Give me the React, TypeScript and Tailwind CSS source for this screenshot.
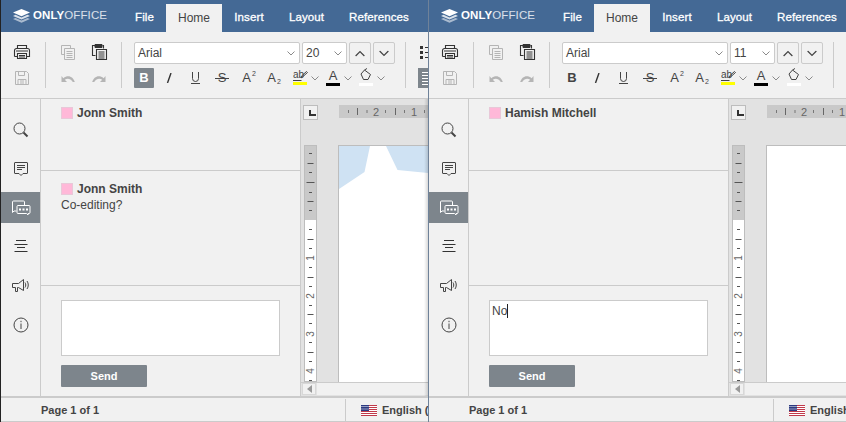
type IconProps = { className?: string };

const Svg = ({ className = "", children, w = 20, h = 20 }: { className?: string; children: React.ReactNode; w?: number; h?: number }) => (
  <svg width={w} height={h} viewBox={`0 0 ${w} ${h}`} fill="none" stroke="currentColor" strokeWidth="1" className={`block ${className}`}>
    {children}
  </svg>
);

const PrintIcon = () => (
  <Svg className="text-[#333]">
    <path d="M5.500 6.500v-3h9v3M2.500 14.500v-6a2 2 0 0 1 2-2h11a2 2 0 0 1 2 2v6h-3M5.500 14.500h-3" strokeWidth="1.100" />
    <path d="M5.500 11.500h9v5h-9z" strokeWidth="1.100" />
    <path d="M4 9h12M7 13.500h6M7 15h6" />
  </Svg>
);
const SaveIcon = () => (
  <Svg className="text-[#b5b5b5]">
    <path d="M3.500 3.500h11l2 2v11h-13z" />
    <path d="M6.500 3.500v4h6v-4M6 16.500v-5h8v5M8 13h4M8 15h4" />
  </Svg>
);
const CopyIcon = () => (
  <Svg className="text-[#b5b5b5]">
    <path d="M3.500 3.500h9v3M3.500 3.500v9h3M6.500 6.500h10v11h-10z" />
    <path d="M8.500 9.500h6M8.500 11.500h6M8.500 13.500h6M8.500 15.500h6" />
  </Svg>
);
const PasteIcon = () => (
  <Svg className="text-[#333]">
    <path d="M6.500 13.500h-3v-10h3M13.500 3.500h1v3" strokeWidth="1.100" />
    <path d="M6 2.500h7v3H6z" fill="currentColor" />
    <path d="M7.500 7.500h10v10h-10z" strokeWidth="1.100" />
    <path d="M9.500 10h6M9.500 12h6M9.500 14h6M9.500 16h6" />
  </Svg>
);
const UndoIcon = ({ flip = false }: { flip?: boolean }) => (
  <Svg className={`text-[#b5b5b5] ${flip ? "-scale-x-100" : ""}`}>
    <path d="M3.500 8v6h5.500l-2.200-2.200c2.800-1.800 5.600-1.200 8 2.200h2c-1.500-5.500-6.800-7.800-11.500-3.800z" fill="currentColor" stroke="none" />
  </Svg>
);
const Chevron = ({ className = "text-[#8a8a8a]" }: IconProps) => (
  <svg width="8" height="5" viewBox="0 0 8 5" fill="none" stroke="currentColor" className={`block ${className}`}>
    <path d="M0.500 0.500 4 4l3.500-3.500" />
  </svg>
);
const SearchIcon = () => (
  <Svg className="text-[#444]">
    <circle cx="8.500" cy="8.500" r="5.500" />
    <path d="m12.500 12.500 4 4" strokeWidth="2" />
  </Svg>
);
const ChatIcon = () => (
  <Svg className="text-[#444]">
    <path d="M4 3.500h12a.5.500 0 0 1 .5.500v10a.5.500 0 0 1-.5.500h-4l-2 2-2-2H4a.5.500 0 0 1-.5-.500V4a.5.500 0 0 1 .5-.500z" />
    <path d="M6 6.500h8M6 8.500h8M6 10.500h5" />
  </Svg>
);
const TalkIcon = () => (
  <svg width="20" height="16" viewBox="0 0 20 16" fill="none" stroke="white" className="block">
    <path d="M5.500 11H3l-1.500 1.500V2a1 1 0 0 1 1-1h10a1 1 0 0 1 1 1v3" />
    <path d="M7 5.500h11a1 1 0 0 1 1 1v6a1 1 0 0 1-1 1h-1v1.500L15.500 13.500H7a1 1 0 0 1-1-1v-6a1 1 0 0 1 1-1z" />
    <path d="M8 9.500h2M11.500 9.500h2M15 9.500h2" strokeWidth="2" />
  </svg>
);
const NavIcon = () => (
  <Svg className="text-[#333]">
    <path d="M5 3.500h10M3.500 7.500h13M6 10.500h8M3.500 14.500h13" />
  </Svg>
);
const SpeakerIcon = () => (
  <Svg className="text-[#444]">
    <path d="M1.500 7.500h6l5-4v11l-5-3h-1v4h-2v-4h-3z" />
    <path d="M14 6.500c1 1.500 1 3.500 0 5M16 5c1.700 2.300 1.700 5.700 0 8" />
  </Svg>
);
const InfoIcon = () => (
  <Svg className="text-[#444]">
    <circle cx="10" cy="10" r="7" />
    <path d="M10 8.500v5.500M10 5.800v1.400" />
  </Svg>
);
const ListIcon = () => (
  <Svg className="text-[#333]">
    <path d="M2 4h3v3H2zM2 9h3v3H2zM2 14h3v3H2z" fill="currentColor" stroke="none" />
    <path d="M7 5.500h13M7 10.500h13M7 15.500h13" strokeWidth="1.200" />
  </Svg>
);
const LogoIcon = () => (
  <svg width="17" height="14" viewBox="0 0 17 14" className="block">
    <path d="M8.500 0 17 3.600 8.500 7.200 0 3.600z" fill="#fff" />
    <path d="M2.500 5.800 8.500 8.400l6-2.600 2.500 1.100-8.500 3.600L0 6.900z" fill="#fff" opacity="0.8" />
    <path d="M2.500 9 8.500 11.600 14.500 9l2.500 1.100-8.500 3.600L0 10.100z" fill="#fff" opacity="0.55" />
  </svg>
);
const Flag = () => (
  <svg width="16" height="11" viewBox="0 0 16 11" className="block">
    <rect width="16" height="11" fill="#fff" />
    {[0, 2, 4, 6, 8, 10].map((y) => (
      <rect key={y} y={y} width="16" height="1" fill="#c0394a" />
    ))}
    <rect width="8" height="6" fill="#2c3a80" />
    {[1, 3, 5, 7].map((x) => (
      <g key={x} fill="#fff">
        <rect x={x - 0.5} y="1" width="1" height="1" />
        <rect x={x - 0.5} y="3.500" width="1" height="1" />
      </g>
    ))}
  </svg>
);

const HRuler = () => (
  <svg width="89" height="13" viewBox="0 0 89 13" className="block text-[#666]">
    {[9, 27.5, 46, 65, 85].map((x) => (
      <rect key={x} x={x} y="5" width="1" height="3" fill="#777" />
    ))}
    {[18, 56].map((x) => (
      <rect key={x} x={x} y="3" width="1" height="7" fill="#666" />
    ))}
    <text x="37" y="10.500" textAnchor="middle" fontSize="11" fill="#666">2</text>
    <text x="75" y="10.500" textAnchor="middle" fontSize="11" fill="#666">1</text>
  </svg>
);

const VRuler = () => {
  const dots = [8, 27, 47, 65, 84, 103, 122, 141, 160, 178, 197, 216, 235];
  const lines = [18, 56, 94, 132, 169, 207];
  const digits: [string, number][] = [["1", 113], ["2", 151], ["3", 189], ["4", 226]];
  return (
    <svg width="13" height="237" viewBox="0 0 13 237" className="block">
      <rect width="13" height="75" fill="#c9c9c9" />
      <rect y="75" width="13" height="162" fill="#fff" />
      <rect x="0.500" y="0.500" width="12" height="236" fill="none" stroke="#bdbdbd" />
      {dots.map((y) => (
        <rect key={y} x="5" y={y} width="3" height="1" fill="#555" />
      ))}
      {lines.map((y) => (
        <rect key={y} x="3.500" y={y} width="6" height="1" fill="#555" />
      ))}
      <rect x="2.500" y="37" width="8" height="1" fill="#555" />
      {digits.map(([d, y]) => (
        <text key={d} x="0" y="0" transform={`translate(10 ${y}) rotate(-90)`} textAnchor="middle" fontSize="10" fill="#666">{d}</text>
      ))}
    </svg>
  );
};

const Toolbar = ({ size, boldOn }: { size: string; boldOn: boolean }) => (
  <div className="flex items-start h-[66px] pt-[10px] bg-[#f1f1f1] overflow-hidden">
    <div className="flex flex-col gap-[6px] w-[44px] pl-[11px] shrink-0">
      <PrintIcon />
      <SaveIcon />
    </div>
    <div className="w-px h-[46px] bg-[#cbcbcb] shrink-0" />
    <div className="grid grid-cols-[20px_20px] gap-x-[11px] gap-y-[6px] w-[75px] pl-[12px] shrink-0">
      <CopyIcon />
      <PasteIcon />
      <UndoIcon />
      <UndoIcon flip />
    </div>
    <div className="w-px h-[46px] bg-[#cbcbcb] shrink-0" />
    <div className="flex flex-col gap-1 w-[273px] pl-[12px] shrink-0">
      <div className="flex items-center gap-[2px] h-[22px]">
        <div className="flex items-center justify-between w-[166px] h-[22px] pl-[3px] pr-[4px] bg-white border border-[#cbcbcb] rounded-[2px] text-[12px] text-[#444]">
          Arial
          <Chevron />
        </div>
        <div className="flex items-center justify-between w-[45px] h-[22px] pl-[3px] pr-[4px] bg-white border border-[#cbcbcb] rounded-[2px] text-[12px] text-[#444]">
          {size}
          <Chevron />
        </div>
        <div className="flex items-center justify-center w-[22px] h-[22px] border border-[#cbcbcb] rounded-[2px]">
          <Chevron className="text-[#444] rotate-180 scale-125" />
        </div>
        <div className="flex items-center justify-center w-[22px] h-[22px] border border-[#cbcbcb] rounded-[2px]">
          <Chevron className="text-[#444] scale-125" />
        </div>
      </div>
      <div className="flex items-center h-5">
        <div className={`flex items-center justify-center w-5 h-5 rounded-[1px] font-bold text-[13px] ${boldOn ? "bg-[#7d858c] text-white" : "text-[#444]"}`}>B</div>
        <div className="flex items-center justify-center w-5 h-5 ml-[5px] text-[#333]">
          <svg width="6" height="10" viewBox="0 0 6 10" stroke="currentColor" strokeWidth="1.400" className="block">
            <path d="M5 0 1.500 10" />
          </svg>
        </div>
        <div className="flex flex-col items-center justify-center w-5 h-5 ml-[6px] text-[#444]">
          <svg width="9" height="12" viewBox="0 0 9 12" fill="none" stroke="currentColor" className="block">
            <path d="M1.500 0v6.500a3 3 0 0 0 6 0V0M0 11.500h9" />
          </svg>
        </div>
        <div className="relative flex items-center justify-center w-5 h-5 ml-[7px] text-[13px] text-[#444]">
          S
          <span className="absolute left-[3px] right-[3px] top-[10px] h-px bg-[#444]" />
        </div>
        <div className="flex items-start justify-center w-5 h-5 ml-[7px] text-[13px] leading-5 text-[#444]">
          A<span className="text-[7px] leading-3 ml-px">2</span>
        </div>
        <div className="flex items-start justify-center w-5 h-5 ml-[5px] text-[13px] leading-5 text-[#444]">
          A<span className="self-end text-[7px] leading-3 ml-px">2</span>
        </div>
        <div className="flex flex-col items-center w-[14px] h-5 ml-[9px]">
          <svg width="15" height="15" viewBox="0 0 15 15" fill="none" stroke="#444" className="block">
            <text x="0" y="10" fontSize="10" fill="#444" stroke="none">ab</text>
            <path d="m8 10 1-2.500 4.500-4 1 1-4.500 4zM0 12.500h8.500" />
          </svg>
          <span className="block w-[14px] h-[3px] mt-[-1px] bg-[#ffff00]" />
        </div>
        <Chevron className="ml-1 text-[#8a8a8a]" />
        <div className="flex flex-col items-center w-[14px] h-5 ml-[7px]">
          <span className="text-[13px] leading-[16px] h-[15px] text-[#444]">A</span>
          <span className="block w-[14px] h-[3px] bg-black" />
        </div>
        <Chevron className="ml-1 text-[#8a8a8a]" />
        <div className="flex flex-col items-center w-[14px] h-5 ml-[7px]">
          <svg width="12" height="14" viewBox="0 0 12 14" fill="none" stroke="#444" className="block">
            <path d="M1 6 4.500 2l6 4.500-2.500 5H3.500z" />
            <path d="M4.500 2 7 .5" />
          </svg>
          <span className="block w-[14px] h-[3px] mt-[1px] bg-white" />
        </div>
        <Chevron className="ml-1 text-[#8a8a8a]" />
      </div>
    </div>
    <div className="w-px h-[46px] ml-[10px] bg-[#cbcbcb] shrink-0" />
    <div className="flex flex-col gap-[6px] ml-[12px] shrink-0">
      <ListIcon />
      <div className="flex flex-col items-center justify-center gap-[2px] w-5 h-5 bg-[#7d858c]">
        {[0, 1, 2, 3, 4].map((i) => (
          <span key={i} className="block w-3 h-px bg-white" />
        ))}
      </div>
    </div>
  </div>
);

const Sidebar = () => (
  <div className="flex flex-col items-center w-[39px] shrink-0 border-r border-[#cbcbcb] box-content">
    <div className="mt-[21px]"><SearchIcon /></div>
    <div className="mt-[19px]"><ChatIcon /></div>
    <div className="flex items-center justify-center w-full h-[31px] mt-[13px] bg-[#7d858c]"><TalkIcon /></div>
    <div className="mt-[14px]"><NavIcon /></div>
    <div className="mt-[19px]"><SpeakerIcon /></div>
    <div className="mt-[19px]"><InfoIcon /></div>
  </div>
);

const Name = ({ children }: { children: React.ReactNode }) => (
  <div className="flex items-center gap-1">
    <span className="block w-3 h-3 bg-[#ffb8d8] border border-[#e8c8d8]" />
    <span className="text-[12px] leading-[14px] font-bold text-[#444]">{children}</span>
  </div>
);

const Comments = ({ name, second, draft }: { name: string; second: boolean; draft: string }) => (
  <div className="flex flex-col w-[259px] shrink-0 border-r border-[#cbcbcb] box-content">
    <div className="h-[72px] pt-[7px] pl-5 border-b border-[#cbcbcb]">
      <Name>{name}</Name>
    </div>
    <div className="h-[115px] pt-[11px] pl-5 border-b border-[#cbcbcb]">
      {second && (
        <>
          <Name>Jonn Smith</Name>
          <p className="mt-[2px] text-[12px] leading-[14px] text-[#444]">Co-editing?</p>
        </>
      )}
    </div>
    <div className="flex flex-col items-start pt-[14px] pl-5">
      <div className="flex items-start w-[219px] h-[56px] pt-[3px] pl-[2px] bg-white border border-[#cbcbcb] text-[12px] leading-[14px] text-[#444]">
        {draft}
        {draft && <span className="block w-px h-[14px] bg-[#222]" />}
      </div>
      <div className="flex items-center justify-center w-[86px] h-[22px] mt-[9px] bg-[#7d858c] rounded-[1px] text-[11px] font-bold text-white">Send</div>
    </div>
  </div>
);

const DocArea = ({ shapes }: { shapes: boolean }) => (
  <div className="relative flex flex-col flex-1 min-w-0 bg-[#e2e2e2] overflow-hidden">
    <div className="flex items-start h-[46px] pt-[6px] pl-[2px]">
      <div className="flex items-end w-[15px] h-[15px] pl-[5px] pb-[3px] border border-[#bdbdbd] shrink-0 bg-[#f1f1f1]">
        <span className="block w-[7px] h-[6px] border-l-2 border-b-2 border-[#333]" />
      </div>
      <div className="ml-[21px] bg-[#c9c9c9] shrink-0"><HRuler /></div>
    </div>
    <div className="flex flex-1 min-h-0">
      <div className="ml-[3px] shrink-0"><VRuler /></div>
      <div className="flex-1 ml-[21px] bg-white border-l border-t border-[#bdbdbd]">
        {shapes && (
          <svg width="89" height="44" viewBox="0 0 89 44" className="block" fill="#cfe2f3">
            <path d="M0 0h31l-5.500 26L0 43zM47 0l11.500 24L89 27V0z" />
          </svg>
        )}
      </div>
    </div>
    <div className="flex h-[14px] pl-px bg-[#e2e2e2] border-t border-[#cbcbcb]">
      <div className="flex items-center justify-center w-[14px] h-[12px] bg-[#f1f1f1] border border-[#d8d8d8]">
        <span className="block w-0 h-0 border-y-[4px] border-y-transparent border-r-[5px] border-r-[#999]" />
      </div>
      <div className="flex-1 h-[12px] ml-[1px] bg-[#f1f1f1]" />
    </div>
    {shapes && <div className="absolute inset-y-0 right-0 w-[4px] bg-gradient-to-r from-transparent to-black/15" />}
  </div>
);

const Tab = ({ className, children }: { className: string; children: React.ReactNode }) => (
  <div className={`flex items-center justify-center h-7 shrink-0 text-[11.500px] tracking-[0.1px] text-white whitespace-nowrap [-webkit-text-stroke:0.3px_white] ${className}`}>{children}</div>
);

const Pane = ({ name, second, draft, size, boldOn, edge }: { name: string; second: boolean; draft: string; size: string; boldOn: boolean; edge: string }) => (
  <div className={`flex flex-col w-[428px] h-[422px] shrink-0 overflow-hidden border-l ${edge}`}>
    <div className="flex items-end h-8 bg-[#446995] shrink-0">
      <div className="flex items-center gap-[3px] w-[122px] h-full pl-3 text-[11.500px] tracking-[0.1px] text-white">
        <LogoIcon />
        <span><b className="font-bold">ONLY</b><span className="text-white/80">OFFICE</span></span>
      </div>
      <Tab className="w-[43px]">File</Tab>
      <div className="flex items-center justify-center w-[56px] h-7 shrink-0 bg-[#f1f1f1] text-[12px] text-[#444]">Home</div>
      <Tab className="w-[54px]">Insert</Tab>
      <Tab className="w-[61px]">Layout</Tab>
      <Tab className="w-[84px]">References</Tab>
    </div>
    <Toolbar size={size} boldOn={boldOn} />
    <div className="flex flex-1 min-h-0 border-t border-[#cbcbcb]">
      <Sidebar />
      <Comments name={name} second={second} draft={draft} />
      <DocArea shapes={second} />
    </div>
    <div className="flex items-center h-[26px] pt-px shrink-0 border-t-2 border-b border-[#cbcbcb] text-[11px] font-bold text-[#444]">
      <div className="w-[344px] pl-10 shrink-0">Page 1 of 1</div>
      <div className="flex items-center gap-[5px] h-full pl-[15px] border-l border-[#cbcbcb] whitespace-nowrap">
        <Flag />
        English (
      </div>
    </div>
  </div>
);

export default function App() {
  return (
    <div className="flex w-[846px] h-[422px] overflow-hidden bg-[#f1f1f1] font-['Liberation_Sans',Arial,sans-serif]">
      <Pane name="Jonn Smith" second draft="" size="20" boldOn edge="border-[#222]" />
      <Pane name="Hamish Mitchell" second={false} draft="No" size="11" boldOn={false} edge="border-[#6f8299]" />
    </div>
  );
}
